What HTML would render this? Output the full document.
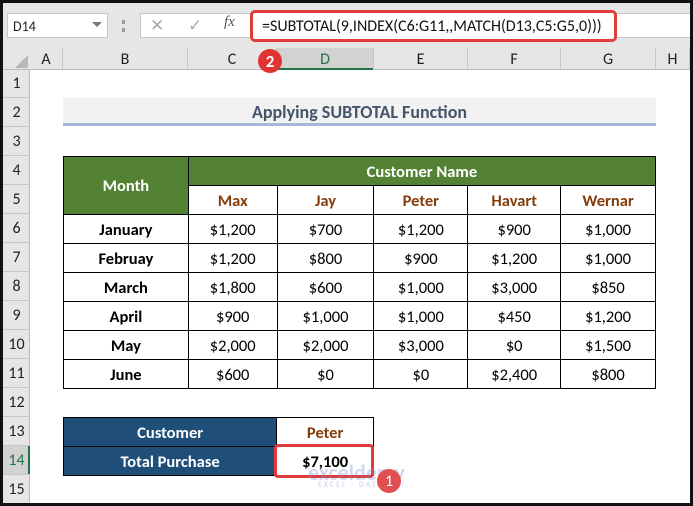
<!DOCTYPE html><html><head><style>
*{margin:0;padding:0;box-sizing:border-box}
body{width:693px;height:506px;position:relative;overflow:hidden;background:#fff;font-family:Calibri,"Liberation Sans",sans-serif}
.a{position:absolute}
.c{position:absolute;display:flex;align-items:center;justify-content:center;font-size:16px}
.t td{border:1.5px solid #000;text-align:center;font-size:16.5px;height:29px;padding:1px 0 0}
</style></head><body>
<div class="a" style="left:0;top:0;width:693px;height:48px;background:#e6e6e6"></div>
<div class="a" style="left:7px;top:13px;width:101px;height:25px;background:#fff;border:1px solid #c8c8c8;font-size:14px;padding:4px 0 0 5px;color:#222">D14</div>
<div class="a" style="left:92px;top:22px;width:0;height:0;border-left:5px solid transparent;border-right:5px solid transparent;border-top:5px solid #777"></div>
<div class="a" style="left:122px;top:20px;width:3px;height:12px;border-left:3px dotted #999"></div>
<div class="a" style="left:140px;top:13px;width:553px;height:25px;background:#fff;border:1px solid #c8c8c8"></div>
<div class="a" style="left:150px;top:15px;font-size:17px;color:#aaa">✕</div>
<div class="a" style="left:188px;top:15px;font-size:17px;color:#aaa">✓</div>
<div class="a" style="left:224px;top:14px;font-size:15px;color:#555;font-style:italic;font-family:'Liberation Serif',serif">fx</div>
<div class="a" style="left:250px;top:10px;width:367px;height:32px;border:3px solid #e23b3b;border-radius:5px;background:#fff;font-size:16px;padding:4px 0 0 9px;color:#111">=SUBTOTAL(9,INDEX(C6:G11,,MATCH(D13,C5:G5,0)))</div>
<div class="a" style="left:0;top:48px;width:693px;height:22px;background:#e6e6e6;border-bottom:1px solid #bbb"></div>
<div class="a" style="left:277px;top:48px;width:97px;height:22px;background:#d2d2d2;border-bottom:2px solid #217346"></div>
<div class="a" style="left:15px;top:55px;width:0;height:0;border-left:13px solid transparent;border-bottom:13px solid #b8b8b8"></div>
<div class="a" style="left:0;top:70px;width:30px;height:436px;background:#e6e6e6;border-right:1px solid #bbb"></div>
<div class="a" style="left:0;top:446px;width:30px;height:29px;background:#d2d2d2;border-right:2px solid #217346"></div>
<div id="cols"></div>
<div class="a" style="left:63px;top:98px;width:593px;height:28px;background:#f2f2f2;border-bottom:3px solid #a4b8dc;font-weight:bold;color:#44546a;font-size:18px;text-align:center;padding-top:3px">Applying SUBTOTAL Function</div>
<table class="t a" style="left:63px;top:156px;border-collapse:collapse;width:593px">
<colgroup><col style="width:125px"><col style="width:89px"><col style="width:97px"><col style="width:94px"><col style="width:93px"><col style="width:95px"></colgroup>
<tr><td rowspan="2" style="background:#548235;color:#fff;font-weight:bold">Month</td><td colspan="5" style="background:#548235;color:#fff;font-weight:bold">Customer Name</td></tr>
<tr style="color:#843c0c;font-weight:bold"><td>Max</td><td>Jay</td><td>Peter</td><td>Havart</td><td>Wernar</td></tr>
<tr><td><b>January</b></td><td>$1,200</td><td>$700</td><td>$1,200</td><td>$900</td><td>$1,000</td></tr>
<tr><td><b>Februay</b></td><td>$1,200</td><td>$800</td><td>$900</td><td>$1,200</td><td>$1,000</td></tr>
<tr><td><b>March</b></td><td>$1,800</td><td>$600</td><td>$1,000</td><td>$3,000</td><td>$850</td></tr>
<tr><td><b>April</b></td><td>$900</td><td>$1,000</td><td>$1,000</td><td>$450</td><td>$1,200</td></tr>
<tr><td><b>May</b></td><td>$2,000</td><td>$2,000</td><td>$3,000</td><td>$0</td><td>$1,500</td></tr>
<tr><td><b>June</b></td><td>$600</td><td>$0</td><td>$0</td><td>$2,400</td><td>$800</td></tr>
</table>
<table class="t a" style="left:63px;top:417px;border-collapse:collapse;width:311px">
<colgroup><col style="width:214px"><col style="width:97px"></colgroup>
<tr><td style="background:#1f4e78;color:#fff;font-weight:bold">Customer</td><td style="color:#843c0c;font-weight:bold">Peter</td></tr>
<tr><td style="background:#1f4e78;color:#fff;font-weight:bold">Total Purchase</td><td style="font-weight:bold">$7,100</td></tr>
</table>
<div class="a" style="left:274px;top:444px;width:100px;height:34px;border:3px solid #e23b3b;border-radius:4px"></div>
<div class="a" style="left:308px;top:459px;font-size:22px;color:rgba(120,140,200,.35);font-weight:bold">exceldemy</div>
<div class="a" style="left:318px;top:480px;font-size:8px;letter-spacing:2px;color:rgba(120,140,200,.4)">EXCEL · DATA · BI</div>
<div class="c" style="left:258px;top:49px;width:24px;height:24px;border-radius:50%;background:#e03434;color:#fff;font-weight:bold;font-size:17px">2</div>
<div class="c" style="left:377px;top:469px;width:24px;height:24px;border-radius:50%;background:#e05050;color:#fff;font-size:16px">1</div>
<div class="a" style="left:0;top:0;width:693px;height:3px;background:#111"></div>
<div class="a" style="left:0;top:0;width:3px;height:506px;background:#111"></div>
<div class="a" style="left:690px;top:0;width:3px;height:506px;background:#111"></div>
<div class="a" style="left:0;top:503px;width:693px;height:3px;background:#111"></div>
<script>
var h='',x=[30,63,188,277,374,468,561,656,690],L='ABCDEFGH';
for(var i=0;i<8;i++){h+='<div class="c" style="left:'+x[i]+'px;top:48px;width:'+(x[i+1]-x[i])+'px;height:22px;border-right:1px solid #c6c6c6;color:'+(i==3?'#217346':'#222')+'">'+L[i]+'</div>';}
for(var r=1;r<=15;r++){h+='<div class="c" style="left:3px;top:'+(69+(r-1)*29)+'px;width:27px;height:29px;border-bottom:1px solid #c6c6c6;color:'+(r==14?'#217346':'#222')+'">'+r+'</div>';}
document.getElementById('cols').innerHTML=h;
</script>
</body></html>
